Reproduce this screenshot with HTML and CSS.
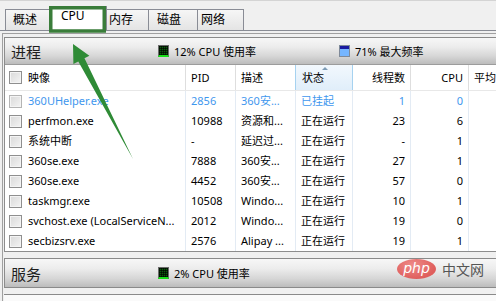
FILE: index.html
```html
<!DOCTYPE html>
<html lang="zh-CN">
<head>
    <meta charset="UTF-8">
    <title>资源监视器 - CPU</title>
    <link rel="stylesheet" href="styles.css">
</head>
<body>

    <div class="tabs">
        <div class="tab t1">概述</div>
        <div class="tab t2 active">CPU</div>
        <div class="tab t3">内存</div>
        <div class="tab t4">磁盘</div>
        <div class="tab t5">网络</div>
    </div>

    <div class="frame">
        <div class="section">
            <div class="section-head">
                <span class="section-title">进程</span>
                <span class="legend legend-cpu"><i class="ico ico-green"></i>12% CPU 使用率</span>
                <span class="legend"><i class="ico ico-blue"></i>71% 最大频率</span>
            </div>

            <div class="grid">
                <div class="row head">
                    <div class="cell c-name"><i class="chk"></i>映像</div>
                    <div class="cell">PID</div>
                    <div class="cell">描述</div>
                    <div class="cell sorted">状态<i class="sort-arrow"></i></div>
                    <div class="cell num">线程数</div>
                    <div class="cell num">CPU</div>
                    <div class="cell">平均 CPU</div>
                </div>
                <div id="rows"></div>
            </div>
        </div>

        <div class="section-head second">
            <span class="section-title">服务</span>
            <span class="legend legend-cpu"><i class="ico ico-green"></i>2% CPU 使用率</span>
        </div>
        <div class="bottom"></div>
    </div>

    <div class="watermark"><span class="wm-php">php</span><span class="wm-cn">中文网</span></div>

    <svg class="annot" width="496" height="301" viewBox="0 0 496 301">
        <rect x="50.75" y="7.75" width="53.5" height="23.25" fill="none" stroke="#3a7d3a" stroke-width="3.5"/>
        <polygon points="73,44 89.4,55.7 84.5,58.3 133,159 78.3,61.5 73.4,64.1" fill="#2f8b36"/>
    </svg>

    <script>
        const procs = [
            { name: "360UHelper.exe", pid: "2856", desc: "360安...", state: "已挂起", thr: "1", cpu: "0", off: true },
            { name: "perfmon.exe", pid: "10988", desc: "资源和...", state: "正在运行", thr: "23", cpu: "6" },
            { name: "系统中断", pid: "-", desc: "延迟过...", state: "正在运行", thr: "-", cpu: "1" },
            { name: "360se.exe", pid: "7888", desc: "360安...", state: "正在运行", thr: "27", cpu: "1" },
            { name: "360se.exe", pid: "4452", desc: "360安...", state: "正在运行", thr: "57", cpu: "0" },
            { name: "taskmgr.exe", pid: "10508", desc: "Windo...", state: "正在运行", thr: "10", cpu: "1" },
            { name: "svchost.exe (LocalServiceN...", pid: "2012", desc: "Windo...", state: "正在运行", thr: "19", cpu: "0" },
            { name: "secbizsrv.exe", pid: "2576", desc: "Alipay ...", state: "正在运行", thr: "19", cpu: "1" }
        ];

        const box = document.getElementById("rows");
        procs.forEach(p => {
            box.innerHTML += `<div class="row${p.off ? ' off' : ''}">
                <div class="cell c-name"><i class="chk"></i>${p.name}</div>
                <div class="cell">${p.pid}</div>
                <div class="cell">${p.desc}</div>
                <div class="cell">${p.state}</div>
                <div class="cell num">${p.thr}</div>
                <div class="cell num">${p.cpu}</div>
                <div class="cell"></div>
            </div>`;
        });
    </script>

</body>
</html>
```

FILE: styles.css
```css
* {
    box-sizing: border-box;
}

html, body {
    margin: 0;
}

body {
    width: 496px;
    height: 301px;
    overflow: hidden;
    position: relative;
    background: #f0f0f0;
    font-family: "Noto Sans", "Noto Sans CJK SC", sans-serif;
    font-size: 11px;
    color: #000;
}

/* tab strip */
.tabs {
    display: flex;
    align-items: flex-end;
    height: 31px;
    padding-left: 5px;
    border-top: 1px solid #d4d4d4;
    border-bottom: 1px solid #898c95;
}

.tab {
    height: 21px;
    line-height: 20px;
    font-size: 12px;
    border: 1px solid #898c95;
    border-bottom: none;
    margin-right: -1px;
    background: linear-gradient(#f6f6f6, #e4e4e4);
    white-space: nowrap;
}

.t1 { width: 45px; padding-left: 7px; }
.t2 { width: 58px; padding-left: 11px; }
.t3 { width: 43px; padding-left: 2px; }
.t4 { width: 50px; padding-left: 8px; }
.t5 { width: 47px; padding-left: 3px; }

.tab.active {
    height: 24px;
    line-height: 18px;
    background: #fff;
}

/* content frame */
.frame {
    width: 560px;
    margin: 2px 0 0 2px;
    border-top: 1px solid #a0a0a0;
    border-left: 1px solid #a0a0a0;
    padding: 3px 0 0 1px;
}

.section {
    border-left: 1px solid #8d8d8d;
    border-bottom: 1px solid #8d8d8d;
}

.section-head {
    display: flex;
    align-items: center;
    height: 28px;
    padding-left: 6px;
    border-top: 1px solid #8a8a8a;
    border-bottom: 1px solid #9c9c9c;
    background: linear-gradient(#f7f7f7, #ececec 35%, #d6d6d6 70%, #bcbcbc);
}

.section-head.second {
    height: 30px;
    margin-top: 6px;
    border-left: 1px solid #8d8d8d;
    border-bottom-color: #8a8a8a;
}

.section-title {
    width: 147px;
    font-size: 15px;
    color: #1e1e1e;
}

.legend {
    display: flex;
    align-items: center;
    white-space: nowrap;
}

.legend-cpu {
    width: 181px;
}

.ico {
    width: 11px;
    height: 12px;
    margin-right: 5px;
    border: 1px solid #6c6c6c;
}

.ico-green {
    background-color: #0c5a0c;
    background-image:
        linear-gradient(90deg, rgba(0, 0, 0, 0.6) 1px, transparent 1px),
        linear-gradient(rgba(0, 0, 0, 0.6) 1px, transparent 1px);
    background-size: 2px 2px;
    border-bottom: 2px solid #19e019;
}

.ico-blue {
    border-color: #7f8a99;
    background: linear-gradient(#1a1aa0 0, #1a1aa0 3px, #76b6ff 3px);
}

/* process table */
.grid {
    background: #fff;
}

.row {
    display: grid;
    grid-template-columns: 181px 50px 60px 57px 58px 58px 90px;
    height: 20px;
}

.row.head {
    height: 26px;
    border-bottom: 1px solid #e8e8e8;
}

.cell {
    padding: 0 5px;
    line-height: 20px;
    white-space: nowrap;
    overflow: hidden;
    border-right: 1px solid #e3ebf4;
}

.head .cell {
    line-height: 25px;
    border-right-color: #dedede;
}

.head .sorted {
    position: relative;
    background: linear-gradient(#f2f8fd, #e0eefa);
    border-left: 1px solid #a6d2f0;
    border-right: 1px solid #a6d2f0;
    margin-left: -1px;
    padding-left: 6px;
}

.sort-arrow {
    position: absolute;
    top: 2px;
    left: 26px;
    width: 0;
    height: 0;
    border-left: 3px solid transparent;
    border-right: 3px solid transparent;
    border-bottom: 3px solid #7c9bb5;
}

.num {
    text-align: right;
}

.c-name {
    display: flex;
    align-items: center;
    gap: 6px;
    padding-left: 4px;
}

.chk {
    flex: none;
    width: 13px;
    height: 13px;
    border: 1px solid #8f8f8f;
    background: linear-gradient(135deg, #d9d9d9, #f4f4f4);
    box-shadow: inset 0 0 0 1px #f4f4f4;
}

.off .cell {
    color: #3f97ee;
}

.off .chk {
    border-color: #b4b4b4;
}

.bottom {
    height: 10px;
    margin-top: 6px;
    border-top: 1px solid #8a8a8a;
    background: #fafafa;
}

/* watermark + annotation overlays */
.watermark {
    position: absolute;
    left: 397px;
    top: 259px;
    display: flex;
    align-items: center;
}

.wm-php {
    width: 39px;
    height: 20px;
    border-radius: 50%;
    background: radial-gradient(ellipse at 40% 30%, #ee8a88, #df5e5c 70%);
    color: #fff;
    font-family: "DejaVu Sans", sans-serif;
    font-style: italic;
    font-size: 14px;
    line-height: 19px;
    text-align: center;
}

.wm-cn {
    margin-left: 6px;
    font-size: 14px;
    color: #555;
}

.annot {
    position: absolute;
    left: 0;
    top: 0;
}
```
